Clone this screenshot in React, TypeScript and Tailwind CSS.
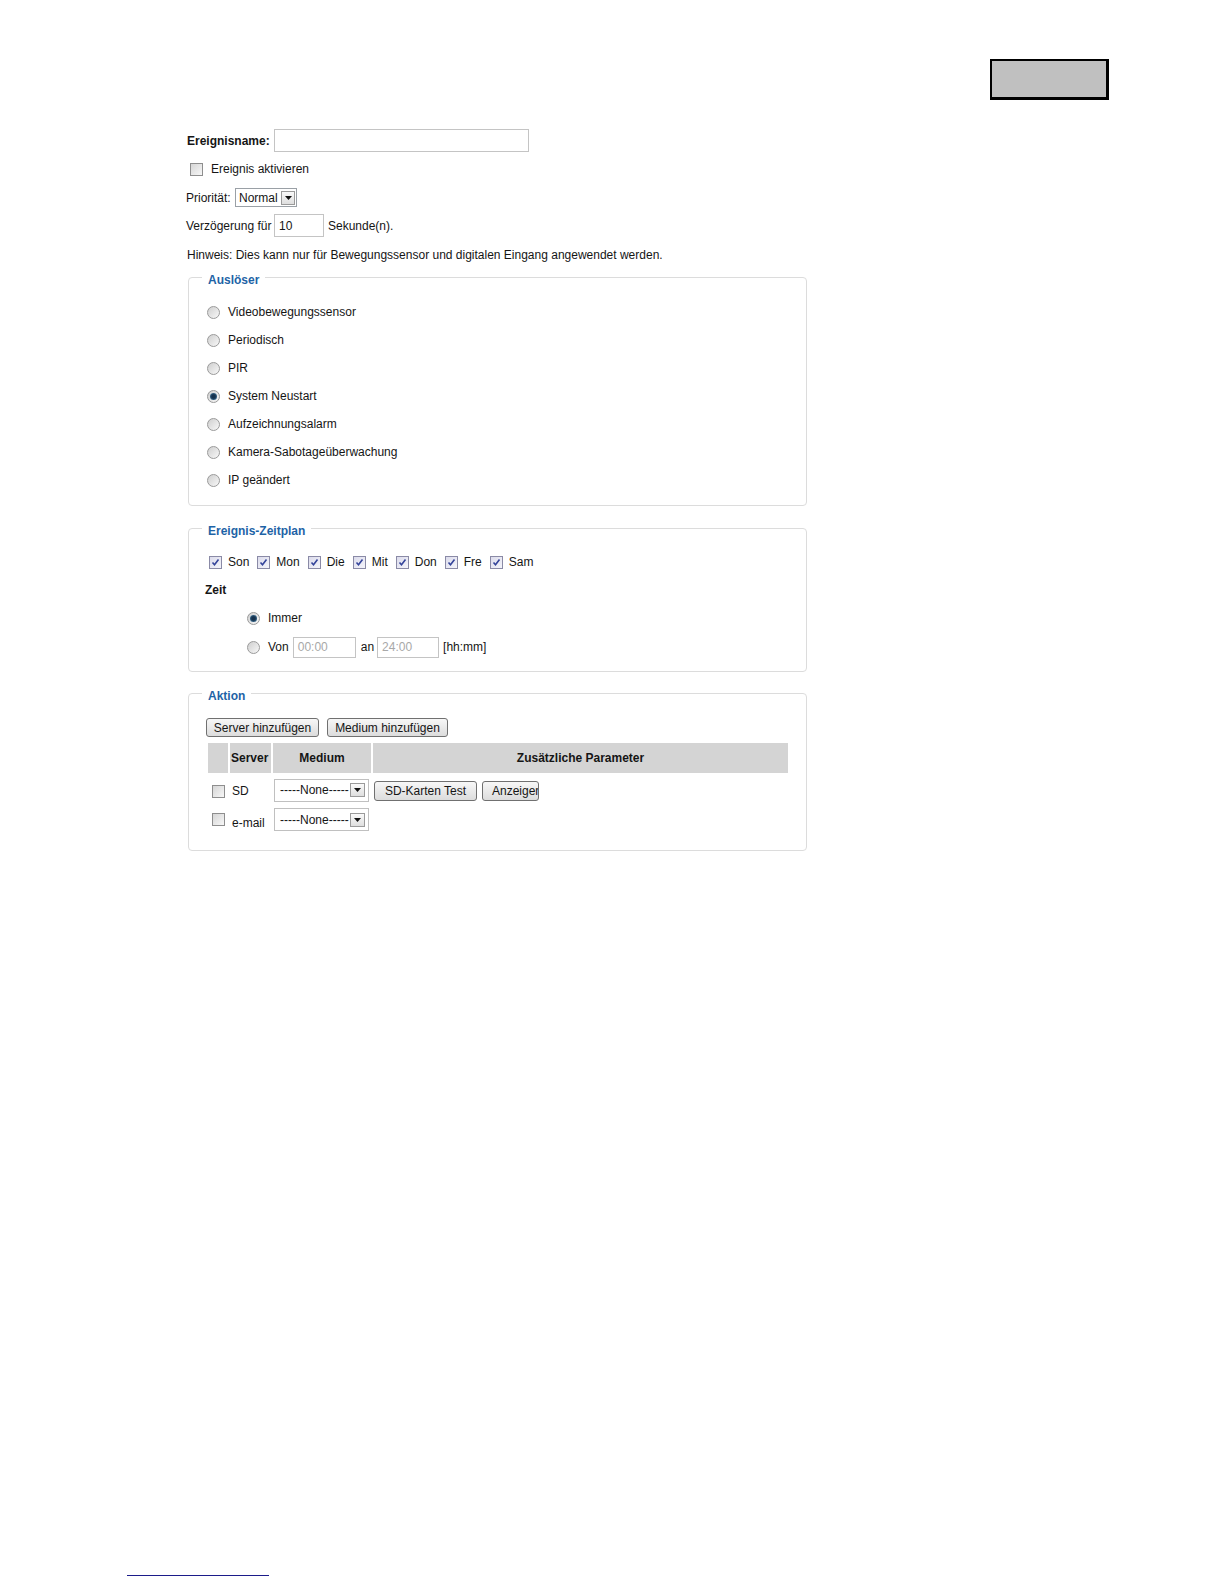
import React from "react";

function Checkbox({ checked = false, className = "" }: { checked?: boolean; className?: string }) {
  return (
    <span
      className={
        "inline-flex shrink-0 items-center justify-center w-[13px] h-[13px] border " +
        (checked
          ? "border-[#8a8aa6] bg-linear-to-br from-[#dcdcec] to-[#f4f4fa] "
          : "border-[#8e8e8e] bg-linear-to-br from-[#d6d6d6] to-[#f7f7f7] ") +
        className
      }
    >
      {checked && (
        <svg width="9" height="9" viewBox="0 0 9 9">
          <path d="M1.5 4.5 L3.5 6.8 L7.5 1.5" fill="none" stroke="#34449a" strokeWidth="1.6" />
        </svg>
      )}
    </span>
  );
}

function Radio({ checked = false, className = "" }: { checked?: boolean; className?: string }) {
  return (
    <span
      className={
        "inline-flex shrink-0 items-center justify-center w-[13px] h-[13px] rounded-full border border-[#9a9a9a] bg-linear-to-br from-[#cfcfcf] to-[#f8f8f8] " +
        className
      }
    >
      {checked && <span className="w-[7px] h-[7px] rounded-full bg-[radial-gradient(circle,#16324e_35%,#4f8fb8_100%)]" />}
    </span>
  );
}

function Arrow({ className = "" }: { className?: string }) {
  return (
    <span
      className={
        "inline-flex shrink-0 items-center justify-center border border-[#9a9a9a] bg-linear-to-b from-[#fafafa] to-[#dedede] " +
        className
      }
    >
      <svg width="7" height="4" viewBox="0 0 7 4">
        <path d="M0 0 L7 0 L3.5 4 Z" fill="#111" />
      </svg>
    </span>
  );
}

function Btn({ children, className = "" }: { children: React.ReactNode; className?: string }) {
  return (
    <span
      className={
        "inline-flex shrink-0 items-center border border-[#707070] rounded-[3px] bg-linear-to-b from-[#f7f7f7] to-[#dcdcdc] whitespace-nowrap overflow-hidden " +
        className
      }
    >
      {children}
    </span>
  );
}

function Legend({ children }: { children: React.ReactNode }) {
  return <legend className="px-[6px] pt-[6px] leading-[14px] font-bold text-[#1e63a6]">{children}</legend>;
}

export default function App() {
  const days = ["Son", "Mon", "Die", "Mit", "Don", "Fre", "Sam"];
  const triggers = [
    "Videobewegungssensor",
    "Periodisch",
    "PIR",
    "System Neustart",
    "Aufzeichnungsalarm",
    "Kamera-Sabotageüberwachung",
    "IP geändert",
  ];
  return (
    <div className="w-[1224px] h-[1584px] bg-white flex flex-col font-['Liberation_Sans',Arial,sans-serif] text-[12px] leading-[14px] text-[#151515]">
      <div className="flex justify-end pr-[115px] pt-[59px]">
        <div className="w-[119px] h-[41px] bg-[#c0c0c0] border-2 border-r-[3px] border-b-[3px] border-black" />
      </div>

      <div className="ml-[186px] flex flex-col">
        <div className="mt-[29px] h-[23px] flex items-center">
          <span className="ml-[1px] w-[87px] font-bold">Ereignisname:</span>
          <span className="w-[255px] h-[23px] border border-[#c4c4c4] bg-white" />
        </div>

        <div className="mt-[6px] h-[22px] flex items-center">
          <Checkbox className="ml-[4px] w-[12px] h-[12px]" />
          <span className="ml-[8px]">Ereignis aktivieren</span>
        </div>

        <div className="mt-[6px] h-[23px] flex items-center">
          <span className="w-[49px]">Priorität:</span>
          <span className="w-[62px] h-[19px] flex items-center border border-[#9aa0a6] bg-white">
            <span className="ml-[3px]">Normal</span>
            <Arrow className="ml-auto mr-[1px] w-[14px] h-[14px]" />
          </span>
        </div>

        <div className="mt-[5px] h-[23px] flex items-center">
          <span className="w-[88px]">Verzögerung für</span>
          <span className="w-[50px] h-[23px] flex items-center border border-[#c4c4c4] bg-white pl-[4px]">10</span>
          <span className="ml-[4px]">Sekunde(n).</span>
        </div>

        <div className="mt-[9px] h-[18px] flex items-center">
          <span className="ml-[1px]">Hinweis: Dies kann nur für Bewegungssensor und digitalen Eingang angewendet werden.</span>
        </div>

        {/* Auslöser */}
        <fieldset className="mt-[3px] ml-[2px] w-[619px] border border-[#dcdcdc] rounded-[4px] px-[13px] pb-[11px]">
          <Legend>Auslöser</Legend>
          <div className="pt-[11px] flex flex-col">
            {triggers.map((t, i) => (
              <div key={t} className="h-[28px] flex items-center">
                <Radio checked={i === 3} className="ml-[5px]" />
                <span className="ml-[8px]">{t}</span>
              </div>
            ))}
          </div>
        </fieldset>

        {/* Ereignis-Zeitplan */}
        <fieldset className="mt-[12px] ml-[2px] w-[619px] border border-[#dcdcdc] rounded-[4px] px-[13px] pb-[13px]">
          <Legend>Ereignis-Zeitplan</Legend>
          <div className="pt-[14px] flex flex-col">
            <div className="h-[20px] flex items-center gap-[8px] ml-[7px]">
              {days.map((d) => (
                <span key={d} className="flex items-center gap-[6px]">
                  <Checkbox checked />
                  <span>{d}</span>
                </span>
              ))}
            </div>
            <div className="mt-[8px] h-[20px] flex items-center ml-[3px] font-bold">Zeit</div>
            <div className="mt-[8px] h-[20px] flex items-center">
              <Radio checked className="ml-[45px]" />
              <span className="ml-[8px]">Immer</span>
            </div>
            <div className="mt-[8px] h-[22px] flex items-center">
              <Radio className="ml-[45px]" />
              <span className="ml-[8px]">Von</span>
              <span className="ml-[4px] w-[63px] h-[21px] flex items-center border border-[#c4c4c4] bg-white pl-[4px] text-[#a8a8a8]">00:00</span>
              <span className="ml-[5px]">an</span>
              <span className="ml-[3px] w-[62px] h-[21px] flex items-center border border-[#c4c4c4] bg-white pl-[4px] text-[#a8a8a8]">24:00</span>
              <span className="ml-[4px]">[hh:mm]</span>
            </div>
          </div>
        </fieldset>

        {/* Aktion */}
        <fieldset className="mt-[11px] ml-[2px] w-[619px] border border-[#dcdcdc] rounded-[4px] px-[13px] pb-[16px]">
          <Legend>Aktion</Legend>
          <div className="pt-[15px] ml-[4px] flex flex-col">
            <div className="flex gap-[8px]">
              <Btn className="w-[113px] h-[19px] justify-center">Server hinzufügen</Btn>
              <Btn className="w-[121px] h-[19px] justify-center">Medium hinzufügen</Btn>
            </div>
            <div className="mt-[4px] w-[584px] p-[2px] grid grid-cols-[20px_41px_98px_415px] grid-rows-[30px_30px_25px] gap-[2px]">
              <div className="bg-[#d4d4d4]" />
              <div className="bg-[#d4d4d4] flex items-center pl-[1px] font-bold">Server</div>
              <div className="bg-[#d4d4d4] flex items-center justify-center font-bold">Medium</div>
              <div className="bg-[#d4d4d4] flex items-center justify-center font-bold">Zusätzliche Parameter</div>

              <div className="flex items-center justify-center pt-[2px]">
                <Checkbox className="w-[12px] h-[12px]" />
              </div>
              <div className="flex items-center pl-[2px] pt-[2px]">SD</div>
              <div className="flex items-center">
                <span className="ml-[1px] w-[95px] h-[23px] flex items-center border border-[#c0c0c0] bg-white">
                  <span className="ml-[5px]">-----None-----</span>
                  <Arrow className="ml-auto mr-[3px] w-[15px] h-[14px]" />
                </span>
              </div>
              <div className="flex items-center gap-[5px] pt-[2px]">
                <Btn className="ml-[1px] w-[103px] h-[20px] justify-center">SD-Karten Test</Btn>
                <Btn className="w-[57px] h-[20px] pl-[9px]">Anzeigen</Btn>
              </div>

              <div className="flex justify-center items-start pt-[6px]">
                <Checkbox className="w-[12px] h-[12px]" />
              </div>
              <div className="flex items-end pl-[2px] pb-[2px]">e-mail</div>
              <div className="flex items-center">
                <span className="ml-[1px] w-[95px] h-[23px] flex items-center border border-[#c0c0c0] bg-white">
                  <span className="ml-[5px]">-----None-----</span>
                  <Arrow className="ml-auto mr-[3px] w-[15px] h-[14px]" />
                </span>
              </div>
              <div />
            </div>
          </div>
        </fieldset>
      </div>

      <div className="mt-auto mb-[8px] ml-[127px] w-[142px] h-[1px] bg-[#1c1c8a]" />
    </div>
  );
}
